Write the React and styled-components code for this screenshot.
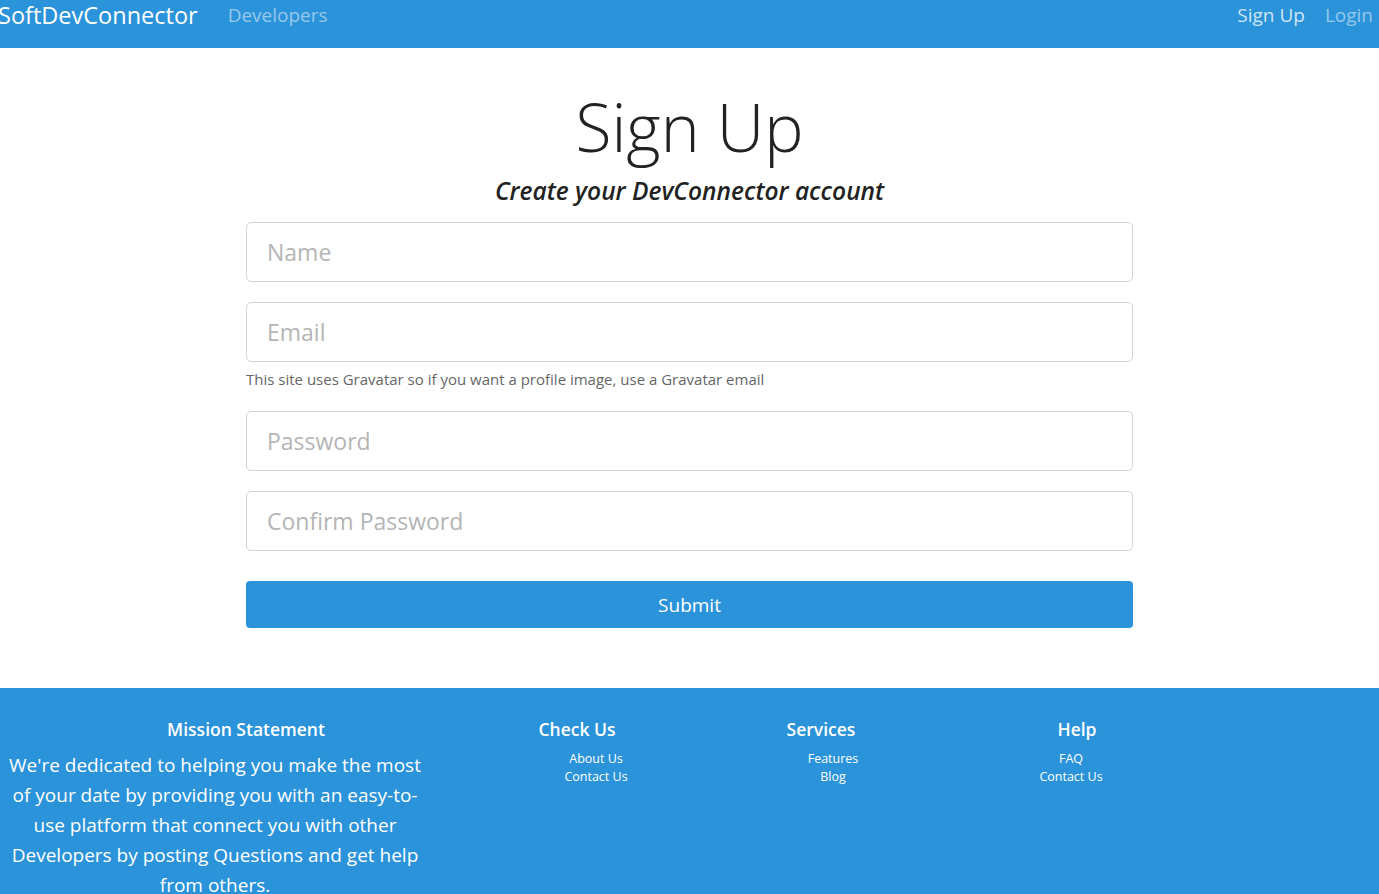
import React from 'react';
import styled, { createGlobalStyle } from 'styled-components';

const GlobalStyle = createGlobalStyle`
  body {
    margin: 0;
    font-family: "Open Sans", "Noto Sans", sans-serif;
    color: #222;
    background: #fff;
  }
  * { box-sizing: border-box; }
`;

const BLUE = '#2b93d9';

function Navbar() {
  return (
    <Nav>
      <NavLeft>
        <Brand>SoftDevConnector</Brand>
        <NavLink>Developers</NavLink>
      </NavLeft>
      <NavRight>
        <NavLink $bright>Sign Up</NavLink>
        <NavLink>Login</NavLink>
      </NavRight>
    </Nav>
  );
}

function Register() {
  return (
    <Main>
      <Title>Sign Up</Title>
      <Lead>Create your DevConnector account</Lead>
      <Form onSubmit={(e) => e.preventDefault()}>
        <Field>
          <Input type="text" placeholder="Name" />
        </Field>
        <Field>
          <Input type="email" placeholder="Email" />
          <Hint>This site uses Gravatar so if you want a profile image, use a Gravatar email</Hint>
        </Field>
        <Field>
          <Input type="password" placeholder="Password" />
        </Field>
        <Field>
          <Input type="password" placeholder="Confirm Password" />
        </Field>
        <SubmitButton type="submit">Submit</SubmitButton>
      </Form>
    </Main>
  );
}

const footerCols = [
  { title: 'Check Us', links: ['About Us', 'Contact Us'], width: 170, shift: 19 },
  { title: 'Services', links: ['Features', 'Blog'], width: 318, shift: 12 },
  { title: 'Help', links: ['FAQ', 'Contact Us'], width: 194, shift: -6 },
];

function Footer() {
  return (
    <FooterBar>
      <Mission>
        <FooterTitle>Mission Statement</FooterTitle>
        <MissionText>
          We're dedicated to helping you make the most of your date by providing you with an
          easy-to-use platform that connect you with other Developers by posting Questions and
          get help from others.
        </MissionText>
      </Mission>
      {footerCols.map((col) => (
        <FooterCol key={col.title} $width={col.width}>
          <FooterTitle>{col.title}</FooterTitle>
          <FooterLinks $shift={col.shift}>
            {col.links.map((l) => (
              <li key={l}>{l}</li>
            ))}
          </FooterLinks>
        </FooterCol>
      ))}
    </FooterBar>
  );
}

export default function App() {
  return (
    <>
      <GlobalStyle />
      <Navbar />
      <Register />
      <Footer />
    </>
  );
}

const Nav = styled.nav`
  height: 48px;
  background: ${BLUE};
  display: flex;
  justify-content: space-between;
  align-items: flex-start;
  padding: 0 6px 0 0;
`;

const NavLeft = styled.div`
  display: flex;
  align-items: center;
  gap: 30px;
`;

const NavRight = styled.div`
  display: flex;
  align-items: center;
  gap: 20px;
`;

const Brand = styled.a`
  color: #fff;
  font-size: 23.5px;
  line-height: 30px;
  margin-left: -2px;
`;

const NavLink = styled.a`
  color: ${(p) => (p.$bright ? 'rgba(255,255,255,0.78)' : 'rgba(255,255,255,0.5)')};
  font-size: 19px;
  line-height: 30px;
`;

const Main = styled.main`
  width: 887px;
  margin: 0 auto;
  padding: 36px 0 60px;
  display: flex;
  flex-direction: column;
  align-items: center;
`;

const Title = styled.h1`
  margin: 0;
  font-size: 66px;
  font-weight: 300;
  line-height: 84px;
  color: #222;
`;

const Lead = styled.p`
  margin: 8px 0 16px;
  font-size: 24.5px;
  font-style: italic;
  font-weight: 600;
  line-height: 30px;
`;

const Form = styled.form`
  width: 100%;
  display: flex;
  flex-direction: column;
  gap: 20px;
`;

const Field = styled.div`
  display: flex;
  flex-direction: column;
`;

const Input = styled.input`
  height: 60px;
  width: 100%;
  border: 1px solid #ced4da;
  border-radius: 5px;
  padding: 0 20px;
  font-family: inherit;
  font-size: 23px;
  color: #222;
  &::placeholder {
    color: #b5b5b5;
  }
`;

const Hint = styled.small`
  margin-top: 7px;
  margin-bottom: 2px;
  font-size: 15px;
  color: #666;
  line-height: 20px;
`;

const SubmitButton = styled.button`
  margin-top: 10px;
  height: 47px;
  border: none;
  border-radius: 4px;
  background: ${BLUE};
  color: #fff;
  font-family: inherit;
  font-size: 19px;
`;

const FooterBar = styled.footer`
  background: ${BLUE};
  color: #fff;
  display: flex;
  padding-top: 28px;
  min-height: 206px;
`;

const Mission = styled.div`
  width: 492px;
  display: flex;
  flex-direction: column;
  align-items: center;
`;

const MissionText = styled.p`
  width: 430px;
  align-self: flex-start;
  margin: 8px 0 0;
  text-align: center;
  font-size: 19px;
  line-height: 30px;
`;

const FooterTitle = styled.h5`
  margin: 0;
  font-size: 17.5px;
  font-weight: 600;
  line-height: 26px;
`;

const FooterCol = styled.div`
  width: ${(p) => p.$width}px;
  display: flex;
  flex-direction: column;
  align-items: center;
`;

const FooterLinks = styled.ul`
  list-style: none;
  margin: 8px 0 0;
  padding: 0;
  transform: translateX(${(p) => p.$shift}px);
  text-align: center;
  font-size: 12.5px;
  line-height: 18px;
`;
